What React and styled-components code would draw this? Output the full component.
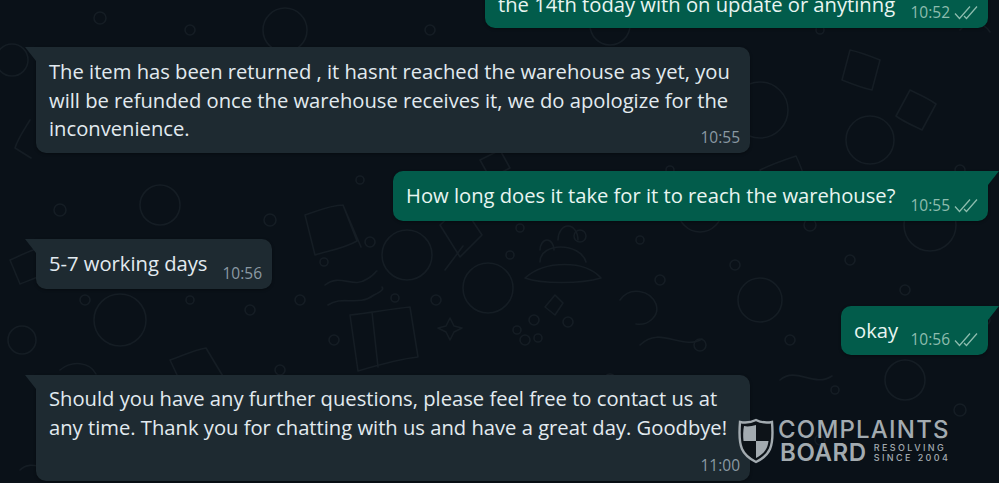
import React from "react";
import styled, { createGlobalStyle } from "styled-components";

const GlobalStyle = createGlobalStyle`
  html, body {
    margin: 0;
    height: 100%;
    background: #0a1118;
    overflow: hidden;
  }
`;

const Chat = styled.div`
  position: relative;
  width: 999px;
  height: 483px;
  overflow: hidden;
  background: #0a1118;
  font-family: "Open Sans", "Noto Sans", sans-serif;
`;

const Wallpaper = styled.svg`
  position: absolute;
  inset: 0;
  width: 999px;
  height: 483px;
  fill: none;
  stroke: #151d24;
  stroke-width: 1.6;
  stroke-linejoin: round;
  stroke-linecap: round;
`;

const Thread = styled.div`
  position: relative;
  display: flex;
  flex-direction: column;
  margin-top: -22px;
  padding: 0 11px 0 36px;
`;

const Bubble = styled.div`
  position: relative;
  box-sizing: border-box;
  align-self: ${(p) => (p.$out ? "flex-end" : "flex-start")};
  display: flex;
  flex-direction: ${(p) => (p.$stacked ? "column" : "row")};
  align-items: stretch;
  width: ${(p) => p.$width}px;
  height: ${(p) => p.$height}px;
  margin-bottom: ${(p) => p.$gap}px;
  padding: ${(p) => p.$padTop}px 10px 0 13px;
  background: ${(p) => (p.$out ? "#025c4b" : "#1e2a31")};
  border-radius: 10px;
  border-top-${(p) => (p.$out ? "right" : "left")}-radius: ${(p) => (p.$tail ? 0 : 10)}px;
  box-shadow: 0 1px 3px rgba(0, 0, 0, 0.35);

  &::before {
    content: ${(p) => (p.$tail ? '""' : "none")};
    position: absolute;
    top: 0;
    ${(p) => (p.$out ? "right: -11px;" : "left: -11px;")}
    width: 11px;
    height: 14px;
    background: inherit;
    clip-path: ${(p) =>
      p.$out
        ? "polygon(0 0, 100% 0, 0 100%)"
        : "polygon(0 0, 100% 0, 100% 100%)"};
  }
`;

const Text = styled.div`
  flex: ${(p) => (p.$stacked ? "none" : "1")};
  color: ${(p) => (p.$out ? "#e8f5f1" : "#e2eaf0")};
  font-size: 20.2px;
  line-height: 28.6px;
  white-space: nowrap;
`;

const Meta = styled.div`
  display: flex;
  align-items: center;
  justify-content: flex-end;
  align-self: flex-end;
  flex: none;
  gap: 4px;
  height: 18px;
  margin-bottom: 7px;
  margin-top: ${(p) => p.$top}px;
  color: ${(p) => (p.$out ? "#8dbcae" : "#8a99a3")};
  font-size: 15.5px;
`;

const Ticks = styled.svg`
  width: 24px;
  height: 15px;
  fill: none;
  stroke: #8dbcae;
  stroke-width: 1.3;
`;

const Watermark = styled.div`
  position: absolute;
  left: 738px;
  top: 418px;
  display: flex;
  gap: 4px;
  color: #a3abb0;
  font-family: "Inter", "Liberation Sans", sans-serif;
`;

const Shield = styled.svg`
  width: 36px;
  height: 46px;
  flex: none;
`;

const Brand = styled.div`
  display: flex;
  flex-direction: column;
`;

const BrandTop = styled.div`
  font-size: 24px;
  line-height: 23px;
  font-weight: 500;
  letter-spacing: 1.2px;
  white-space: nowrap;
`;

const BrandBottom = styled.div`
  display: flex;
  align-items: center;
  gap: 7px;
  margin-left: 2px;
`;

const BrandBoard = styled.div`
  font-size: 24px;
  line-height: 23px;
  font-weight: 600;
  letter-spacing: 0.6px;
`;

const Tagline = styled.div`
  font-size: 9px;
  line-height: 9.5px;
  font-weight: 500;
  letter-spacing: 2.4px;
  white-space: nowrap;
`;

const circles = [
  [407, 255, 25], [488, 288, 25], [525, 340, 5], [517, 330, 4], [370, 242, 5],
  [324, 262, 4], [436, 300, 5], [395, 298, 4], [334, 340, 5], [520, 228, 4],
  [510, 255, 4], [534, 320, 5], [568, 322, 5], [538, 338, 4], [580, 236, 6],
  [610, 380, 6], [655, 420, 22], [120, 320, 26], [220, 415, 24], [760, 110, 28],
  [870, 140, 24], [930, 225, 26], [700, 210, 22], [820, 440, 5], [760, 300, 22],
  [160, 205, 20], [60, 210, 6], [285, 30, 22], [610, 25, 20], [430, 30, 5],
  [360, 180, 4], [100, 18, 6], [190, 30, 5], [850, 260, 5], [660, 280, 5],
  [960, 410, 6], [905, 380, 20], [340, 460, 20], [80, 440, 6], [12, 60, 16],
  [22, 340, 14], [590, 465, 5], [475, 440, 18], [270, 220, 6], [250, 310, 5],
  [700, 345, 6], [730, 20, 5], [810, 225, 6], [985, 320, 5], [150, 470, 5],
  [85, 300, 5], [190, 300, 4], [300, 300, 5], [640, 240, 4], [735, 265, 5],
  [790, 340, 5], [835, 390, 4], [560, 395, 4], [420, 420, 5], [280, 370, 5],
  [905, 290, 5], [960, 170, 5], [820, 30, 4], [670, 170, 4],
];

const doodles = [
  "M305 215 c12 -4 26 -10 38 -10 l14 36 c-14 8 -30 10 -42 14 z M343 205 l18 42",
  "M325 285 c15 -12 28 4 42 -6 c10 -6 8 -8 10 -8 M328 305 c14 -10 30 2 46 -10 c8 -4 10 -6 8 -8",
  "M350 315 c20 -2 40 -6 60 -8 l8 50 c-20 2 -40 8 -60 14 z M372 312 l6 55",
  "M440 225 l22 -20 l20 30 l-22 22 z M445 270 l18 -24",
  "M540 262 c0 -20 40 -20 46 0 M525 278 c20 -18 60 -18 76 0 c-20 6 -60 6 -76 0",
  "M558 240 a10 14 0 1 1 20 0 M540 250 a7 10 0 1 1 14 0",
  "M450 318 l4 8 l8 2 l-8 4 l-4 8 l-4 -8 l-8 -4 l8 -2 z",
  "M555 295 l8 8 l-8 12 l-10 -8 z",
  "M30 120 c-6 10 -12 18 -15 28 l16 10 M10 260 c10 -4 20 -10 30 -12 l12 22 c-10 6 -22 10 -32 14 z",
  "M170 360 c12 -4 24 -10 36 -12 l18 30 c-12 6 -26 12 -38 16 z M95 400 c20 -18 40 10 60 -4",
  "M760 170 c12 -6 24 -10 36 -14 c6 12 10 26 14 38 c-12 4 -24 10 -36 12 z M850 50 c10 2 20 6 30 10 l-8 30 c-10 -2 -20 -6 -30 -10 z",
  "M640 120 c10 -2 22 -6 32 -8 l8 32 c-10 2 -22 6 -32 8 z M640 345 c20 -20 42 6 62 -6",
  "M780 380 c16 -14 34 8 52 -4 M910 90 c8 4 18 8 26 14 l-14 26 c-8 -4 -18 -8 -26 -14 z",
  "M250 120 c14 -14 30 6 46 -6 M480 160 l20 -10 l10 18 l-20 10 z",
  "M20 470 c12 -12 26 4 38 -6 M540 400 c12 -2 22 -6 34 -8 l8 32 c-12 2 -22 6 -34 8 z",
  "M620 300 c10 -14 30 -10 36 4 c4 12 -8 22 -20 20 M870 320 c14 -10 30 -6 36 6 M60 370 c12 -10 30 -8 36 4",
  "M200 250 c10 -8 24 -6 30 4 M240 460 c12 -10 28 -8 34 2 M690 460 c10 -10 30 -8 36 2 M960 30 c8 -10 24 -8 30 2",
];

function DoubleTick() {
  return (
    <Ticks viewBox="0 0 24 15">
      <path d="M1 8.5 L5.5 13.5 L16 1.5" />
      <path d="M10 11 L12.5 13.5 L23 1.5" />
    </Ticks>
  );
}

function Message({ out, tail, stacked, width, height, gap, padTop = 10, metaTop = 0, time, children }) {
  return (
    <Bubble $out={out} $tail={tail} $stacked={stacked} $width={width} $height={height} $gap={gap} $padTop={padTop}>
      <Text $out={out} $stacked={stacked}>{children}</Text>
      <Meta $out={out} $top={metaTop}>
        {time}
        {out && <DoubleTick />}
      </Meta>
    </Bubble>
  );
}

export default function App() {
  return (
    <Chat>
      <GlobalStyle />
      <Wallpaper viewBox="0 0 999 483">
        {circles.map(([cx, cy, r]) => (
          <circle key={`${cx}-${cy}`} cx={cx} cy={cy} r={r} />
        ))}
        {doodles.map((d) => (
          <path key={d} d={d} />
        ))}
      </Wallpaper>

      <Thread>
        <Message out width={503} height={50} gap={19} padTop={12} time="10:52" metaTop={25}>
          the 14th today with on update or anytinng
        </Message>
        <Message tail stacked width={714} height={106} gap={18} time="10:55" metaTop={-15}>
          The item has been returned , it hasnt reached the warehouse as yet, you
          <br />
          will be refunded once the warehouse receives it, we do apologize for the
          <br />
          inconvenience.
        </Message>
        <Message out tail width={595} height={50} gap={18} time="10:55" metaTop={25}>
          How long does it take for it to reach the warehouse?
        </Message>
        <Message tail width={236} height={50} gap={17} time="10:56" metaTop={25}>
          5-7 working days
        </Message>
        <Message out tail width={147} height={49} gap={20} time="10:56" metaTop={24}>
          okay
        </Message>
        <Message tail stacked width={714} height={106} gap={0} padTop={9} time="11:00" metaTop={15}>
          Should you have any further questions, please feel free to contact us at
          <br />
          any time. Thank you for chatting with us and have a great day. Goodbye!
        </Message>
      </Thread>

      <Watermark>
        <Shield viewBox="0 0 36 46">
          <path d="M18 2 C24 5 29 5 34 4 C35 16 35 24 32 31 C29 38 24 41 18 44 C12 41 7 38 4 31 C1 24 1 16 2 4 C7 5 12 5 18 2 Z" fill="#0d1318" stroke="#a3abb0" strokeWidth="2.4" />
          <path d="M6 8 C10 9 14 8 18 7 V23 H5.5 C5 18 5 13 6 8 Z" fill="#a3abb0" />
          <path d="M18 23 H30.5 C30 27 29 30 27.5 32 C25 36 22 38 18 40 Z" fill="#a3abb0" />
        </Shield>
        <Brand>
          <BrandTop>COMPLAINTS</BrandTop>
          <BrandBottom>
            <BrandBoard>BOARD</BrandBoard>
            <Tagline>
              RESOLVING
              <br />
              SINCE 2004
            </Tagline>
          </BrandBottom>
        </Brand>
      </Watermark>
    </Chat>
  );
}
